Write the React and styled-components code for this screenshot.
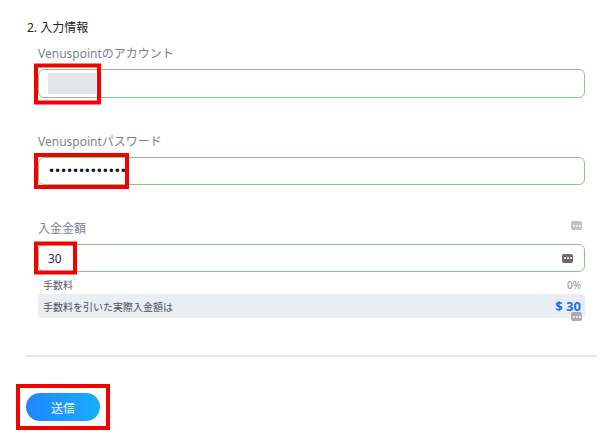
import React from 'react';
import styled, { createGlobalStyle } from 'styled-components';

const GlobalStyle = createGlobalStyle`
    body {
        margin: 0;
        background: #fff;
        font-family: 'Noto Sans', 'Noto Sans CJK JP', sans-serif;
    }
`;

const fields = [
    { label: 'Venuspointのアカウント', kind: 'account', height: 29, markWidth: 67, markHeight: 41 },
    { label: 'Venuspointパスワード', kind: 'password', height: 28, markWidth: 95, markHeight: 36 },
];

export default () => (
    <Page>
        <GlobalStyle />
        <Title>2. 入力情報</Title>
        <Fields>
            {fields.map(f => (
                <Field key={f.kind}>
                    <Label>{f.label}</Label>
                    <InputBox h={f.height}>
                        <Mark w={f.markWidth} h={f.markHeight} />
                        {f.kind === 'account' ? <Masked /> : <Dots>•••••••••••••</Dots>}
                    </InputBox>
                </Field>
            ))}
            <Field>
                <LabelRow>
                    <Label>入金金額</Label>
                    <KeyIcon tone="#c2c2c2" />
                </LabelRow>
                <InputBox h={28}>
                    <Mark w={43} h={33} />
                    <Amount>30</Amount>
                    <KeyIcon tone="#6b6b6b" />
                </InputBox>
                <FeeRow>
                    <span>手数料</span>
                    <span>0%</span>
                </FeeRow>
                <TotalBar>
                    <span>手数料を引いた実際入金額は</span>
                    <Total>$ 30</Total>
                    <FloatKey>
                        <KeyIcon tone="#ababab" />
                    </FloatKey>
                </TotalBar>
            </Field>
        </Fields>
        <Divider />
        <SubmitWrap>
            <Mark w={94} h={46} left={-10} />
            <Submit>送信</Submit>
        </SubmitWrap>
    </Page>
);

const KeyIcon = ({ tone }) => (
    <KeyGlyph tone={tone}>
        <i /><i /><i />
    </KeyGlyph>
);

const Page = styled.div`
    padding: 20px 3px 20px 26px;
`;

const Title = styled.div`
    font-size: 12px;
    line-height: 16px;
    color: #1f1f1f;
    padding-left: 1px;
`;

const Fields = styled.div`
    display: flex;
    flex-direction: column;
    gap: 36px;
    padding: 10px 12px 0 12px;
`;

const Field = styled.div`
    display: flex;
    flex-direction: column;
`;

const LabelRow = styled.div`
    display: flex;
    align-items: flex-start;
    justify-content: space-between;
    padding-right: 3px;
`;

const Label = styled.div`
    font-size: 12px;
    line-height: 16px;
    color: #7b8190;
    margin-bottom: 7px;
`;

const InputBox = styled.div`
    position: relative;
    height: ${p => p.h}px;
    box-sizing: border-box;
    border: 1.5px solid #7fcb8f;
    border-radius: 6px;
    display: flex;
    align-items: center;
    justify-content: space-between;
    padding: 0 11px 0 9px;
`;

// red outline laid over the start of a control
const Mark = styled.div`
    position: absolute;
    left: ${p => p.left ?? -5}px;
    top: 50%;
    width: ${p => p.w}px;
    height: ${p => p.h}px;
    transform: translateY(-50%);
    box-sizing: border-box;
    border: 4px solid #f50000;
    pointer-events: none;
    z-index: 2;
`;

const Masked = styled.div`
    width: 48px;
    height: 21px;
    background: #e3e4e8;
`;

const Dots = styled.div`
    font-family: 'DejaVu Sans', sans-serif;
    font-size: 12px;
    letter-spacing: -1.1px;
    color: #0b1530;
    line-height: 1;
`;

const Amount = styled.div`
    font-size: 12px;
    color: #1e2a44;
`;

const KeyGlyph = styled.span`
    display: inline-flex;
    align-items: center;
    justify-content: center;
    gap: 1px;
    width: 11px;
    height: 9px;
    border-radius: 2px;
    background: ${p => p.tone};

    i {
        width: 2px;
        height: 2px;
        border-radius: 50%;
        background: #fff;
    }
`;

const FeeRow = styled.div`
    display: flex;
    justify-content: space-between;
    font-size: 10px;
    line-height: 16px;
    color: #555b66;
    padding: 5px 4px 1px 5px;

    span:last-child {
        color: #8a8f99;
    }
`;

const TotalBar = styled.div`
    position: relative;
    height: 24px;
    border-radius: 4px;
    background: #eaedf1;
    display: flex;
    align-items: center;
    justify-content: space-between;
    padding: 0 4px 0 5px;
    font-size: 10px;
    color: #4a505b;
`;

const Total = styled.span`
    font-size: 13px;
    font-weight: 700;
    color: #1a6cf5;
`;

const FloatKey = styled.div`
    position: absolute;
    right: 3px;
    bottom: -3px;
`;

const Divider = styled.div`
    height: 2px;
    background: #e4e6ea;
    margin-top: 37px;
`;

const SubmitWrap = styled.div`
    position: relative;
    margin-top: 36px;
    width: 74px;
`;

const Submit = styled.button`
    display: block;
    width: 74px;
    height: 28px;
    border: none;
    border-radius: 14px;
    background: linear-gradient(90deg, #1f86ff, #18aefc);
    color: #fff;
    font-family: 'Noto Sans CJK JP', sans-serif;
    font-size: 12px;
    padding: 0;
`;
